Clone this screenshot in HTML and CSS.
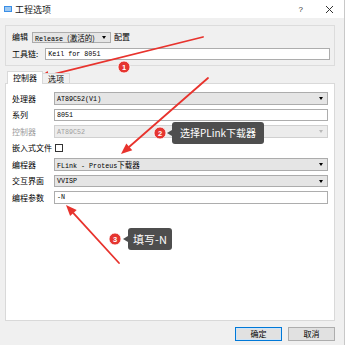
FILE: index.html
```html
<!DOCTYPE html>
<html>
    <head>
        <meta charset="utf-8">
        <link rel="stylesheet" href="styles.css">
    </head>
    <body>
        <div class="window">
            <div class="titlebar">
                <span class="app-icon"></span>
                <span class="title">工程选项</span>
                <span class="spacer"></span>
                <span class="help">?</span>
                <svg class="close" width="9" height="9" viewBox="0 0 9 9">
                    <path d="M1 1 L8 8 M8 1 L1 8" stroke="#333" stroke-width="1"/>
                </svg>
            </div>
            <div class="content">
                <div class="group">
                    <div class="grow">
                        <span class="lbl">编辑</span>
                        <div class="combo release"><span>Release <span class="cjk">(激活的)</span></span><span class="caret"></span></div>
                        <span class="lbl">配置</span>
                    </div>
                    <div class="grow">
                        <span class="lbl">工具链:</span>
                        <div class="edit toolchain">Keil for 8051</div>
                    </div>
                </div>
                <div class="tabs">
                    <div class="tab active">控制器</div>
                    <div class="tab">选项</div>
                </div>
                <div class="pane">
                    <div class="row">
                        <span class="lbl">处理器</span>
                        <div class="combo field"><span>AT89C52(V1)</span><span class="caret"></span></div>
                    </div>
                    <div class="row">
                        <span class="lbl">系列</span>
                        <div class="edit field">8051</div>
                    </div>
                    <div class="row">
                        <span class="lbl disabled">控制器</span>
                        <div class="combo field off"><span>AT89C52</span><span class="caret"></span></div>
                    </div>
                    <div class="row">
                        <span class="lbl">嵌入式文件</span>
                        <span class="check"></span>
                    </div>
                    <div class="row">
                        <span class="lbl">编程器</span>
                        <div class="combo field"><span>FLink - Proteus<span class="cjk">下载器</span></span><span class="caret"></span></div>
                    </div>
                    <div class="row">
                        <span class="lbl">交互界面</span>
                        <div class="combo field"><span>VVISP</span><span class="caret"></span></div>
                    </div>
                    <div class="row">
                        <span class="lbl">编程参数</span>
                        <div class="edit field">-N</div>
                    </div>
                </div>
                <div class="buttons">
                    <button class="btn default">确定</button>
                    <button class="btn">取消</button>
                </div>
            </div>

            <svg class="marks" width="345" height="345" viewBox="0 0 345 345">
                <g stroke="#e8332d" stroke-width="1.8" stroke-linecap="round" fill="#e8332d">
                    <line x1="203" y1="37" x2="48.7" y2="75.4"/>
                    <polygon points="38,78 49.8,79.7 47.6,71" stroke="none"/>
                    <line x1="208" y1="78" x2="129.3" y2="146.8"/>
                    <polygon points="121,154 132.3,150.2 126.3,143.4" stroke="none"/>
                    <line x1="119" y1="263" x2="73.4" y2="213.1"/>
                    <polygon points="66,205 70.1,216.1 76.7,210.1" stroke="none"/>
                </g>
                <g fill="#e53530" stroke="#fff" stroke-width="0.8">
                    <circle cx="124" cy="67" r="6"/>
                    <circle cx="160" cy="133" r="6"/>
                    <circle cx="115" cy="239" r="6"/>
                </g>
                <g fill="#fff" font-family="Liberation Sans, sans-serif" font-size="7.5" font-weight="bold" text-anchor="middle">
                    <text x="124" y="69.7">1</text>
                    <text x="160" y="135.7">2</text>
                    <text x="115" y="241.7">3</text>
                </g>
                <g fill="#4e4e4e">
                    <polygon points="167,133 172,130 172,136"/>
                    <polygon points="123,239 128,236 128,242"/>
                </g>
            </svg>
            <div class="tip tip-plink">选择PLink下载器</div>
            <div class="tip tip-n">填写-N</div>
        </div>
    </body>
</html>
```

FILE: styles.css
```css
:root {
    --face: #f0f0f0;
    --edge: #acacac;
    --cn: "Noto Sans CJK SC", "Noto Sans", sans-serif;
    --mono: "Liberation Mono", "Noto Sans CJK SC", monospace;
}
html, body {
    margin: 0;
    padding: 0;
}
body {
    width: 345px;
    height: 345px;
    overflow: hidden;
    background: var(--face);
    font-family: var(--cn);
    color: #000;
}
.window {
    position: relative;
    width: 345px;
    height: 345px;
    box-sizing: border-box;
    border-right: 1px solid #c8c8c8;
}
.titlebar {
    height: 18px;
    background: #fff;
    display: flex;
    align-items: center;
    padding: 0 10px 0 4px;
}
.app-icon {
    width: 6px;
    height: 4px;
    border: 1px solid #3a8ee6;
    background: #9cc8f2;
    margin-right: 3px;
}
.title {
    font-size: 9px;
    color: #222;
}
.spacer {
    flex-grow: 1;
}
.help {
    font-family: "Liberation Sans", sans-serif;
    font-size: 8px;
    color: #333;
    margin-right: 22px;
}
.content {
    display: flex;
    flex-direction: column;
    padding: 0 9px 0 5px;
}
.lbl {
    font-size: 8px;
    line-height: 12px;
    white-space: nowrap;
}
.lbl.disabled {
    color: #9a9a9a;
}
.group {
    margin-top: 7px;
    height: 41px;
    box-sizing: border-box;
    border: 1px solid #dcdcdc;
    padding: 5px 4px 0 6px;
    display: flex;
    flex-direction: column;
    gap: 5px;
}
.grow {
    display: flex;
    align-items: center;
    height: 12px;
}
.combo {
    display: flex;
    align-items: center;
    justify-content: space-between;
    box-sizing: border-box;
    height: 12px;
    background: #e5e5e5;
    border: 1px solid var(--edge);
    padding: 0 4px 0 2px;
    font-family: var(--mono);
    font-size: 6.7px;
    white-space: nowrap;
}
.combo.off {
    background: #ececec;
    border-color: #d0d0d0;
    color: #a0a0a0;
}
.combo.off .caret {
    border-top-color: #b8b8b8;
}
.cjk {
    font-family: var(--cn);
    font-size: 7.5px;
}
.caret {
    width: 0;
    height: 0;
    border-left: 2.5px solid transparent;
    border-right: 2.5px solid transparent;
    border-top: 3px solid #000;
}
.release {
    width: 79px;
    margin: 0 3px 0 4px;
    height: 11px;
}
.edit {
    box-sizing: border-box;
    height: 12px;
    background: #fff;
    border: 1px solid #adadad;
    padding: 0 2px;
    font-family: var(--mono);
    font-size: 6.7px;
    line-height: 10px;
    white-space: nowrap;
}
.toolchain {
    flex-grow: 1;
    margin-left: 7px;
}
.tabs {
    display: flex;
    align-items: flex-end;
    margin-top: 5px;
    height: 12px;
    padding-left: 2px;
    position: relative;
    z-index: 1;
}
.tab {
    box-sizing: border-box;
    height: 10px;
    padding: 0 5px;
    font-size: 8px;
    line-height: 9px;
    white-space: nowrap;
    border: 1px solid #d9d9d9;
    border-bottom: none;
    background: #f0f0f0;
}
.tab.active {
    height: 13px;
    line-height: 12px;
    margin-bottom: -1px;
    margin-right: -1px;
    background: #fff;
}
.pane {
    height: 238px;
    box-sizing: border-box;
    background: #fff;
    border: 1px solid #d9d9d9;
    padding: 8px 6px 0 6px;
    display: flex;
    flex-direction: column;
    gap: 3.5px;
}
.row {
    display: grid;
    grid-template-columns: 42px 1fr;
    align-items: center;
    height: 13px;
}
.field {
    height: 12.5px;
}
.check {
    width: 8px;
    height: 8px;
    box-sizing: border-box;
    border: 1px solid #333;
    background: #fff;
    margin-left: 1px;
}
.buttons {
    display: flex;
    justify-content: flex-end;
    gap: 6px;
    margin-top: 6px;
}
.btn {
    width: 47px;
    height: 14px;
    padding: 0;
    background: #e1e1e1;
    border: 1px solid #adadad;
    font-family: var(--cn);
    font-size: 8px;
    line-height: 12px;
    color: #000;
}
.btn.default {
    border: 1px solid #0078d7;
    box-shadow: inset 0 0 0 1px #cfe4f7;
}
.marks {
    position: absolute;
    top: 0;
    left: 0;
    pointer-events: none;
}
.tip {
    position: absolute;
    height: 22px;
    box-sizing: border-box;
    background: #4e4e4e;
    border-radius: 3px;
    color: #fff;
    font-family: var(--cn);
    line-height: 22px;
    white-space: nowrap;
    text-align: center;
}
.tip-plink {
    left: 172px;
    top: 122px;
    width: 92px;
    font-size: 10px;
}
.tip-n {
    left: 128px;
    top: 228px;
    width: 44px;
    font-size: 11px;
}
```
